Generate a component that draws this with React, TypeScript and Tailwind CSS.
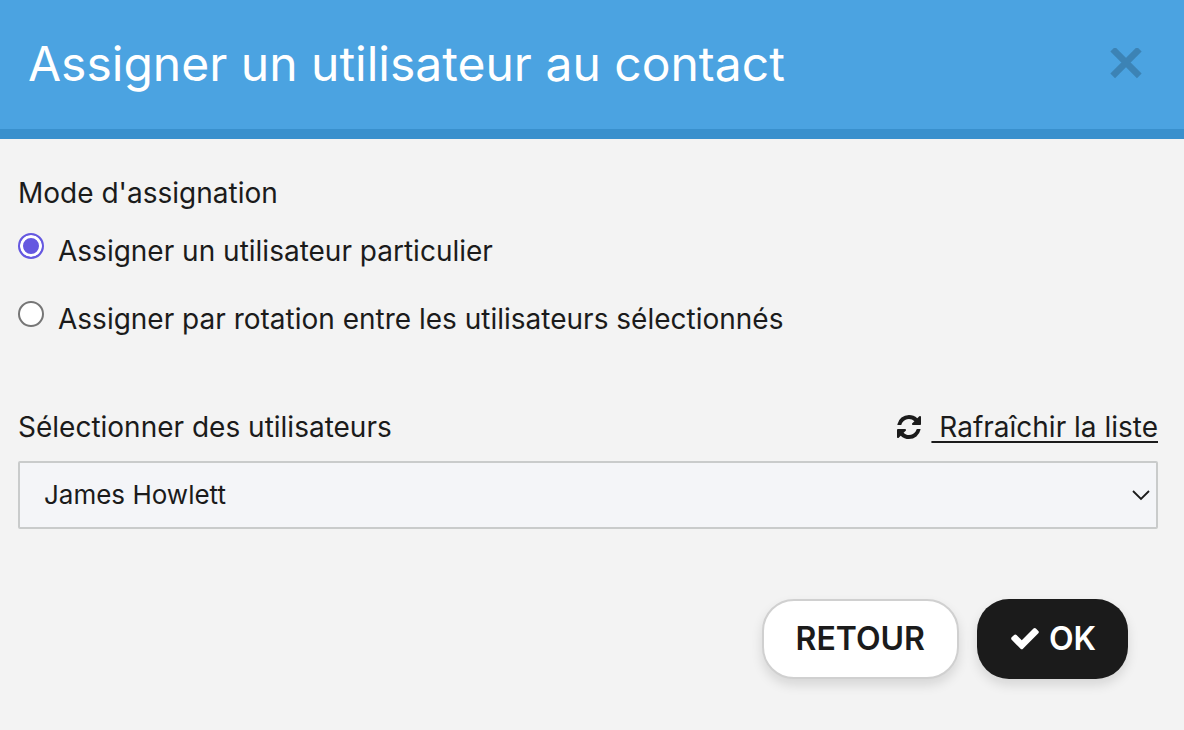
import React, { useState } from 'react';

type AssignMode = 'single' | 'rotation';

const MODES: { value: AssignMode; label: string }[] = [
  { value: 'single', label: 'Assigner un utilisateur particulier' },
  { value: 'rotation', label: 'Assigner par rotation entre les utilisateurs sélectionnés' },
];

const USERS = ['James Howlett'];

const CloseIcon: React.FC = () => (
  <svg className="h-8 w-8" viewBox="0 0 32 32" fill="none" stroke="currentColor" strokeWidth={6.6} aria-hidden="true">
    <path d="M2.7 1.2l26.6 26.6M29.3 1.2L2.7 27.8" />
  </svg>
);

const RefreshIcon: React.FC = () => (
  <svg className="h-6 w-6" viewBox="0 128 1536 1536" fill="currentColor" aria-hidden="true">
    <path d="M1511 1056q0 5-1 7-64 268-268 434.5t-478 166.5q-146 0-282.5-55t-243.5-157l-129 129q-19 19-45 19t-45-19-19-45v-448q0-26 19-45t45-19h448q26 0 45 19t19 45-19 45l-137 137q71 66 161 102t187 36q134 0 250-65t186-179q11-17 53-117 8-23 30-23h192q13 0 22.5 9.5t9.5 22.5zm25-800v448q0 26-19 45t-45 19h-448q-26 0-45-19t-19-45 19-45l138-138q-148-137-349-137-134 0-250 65t-186 179q-11 17-53 117-8 23-30 23h-199q-13 0-22.5-9.5t-9.5-22.5v-7q65-268 270-434.5t480-166.5q146 0 284 55.5t245 156.5l130-129q19-19 45-19t45 19 19 45z" />
  </svg>
);

const CheckIcon: React.FC = () => (
  <svg className="h-8 w-8" viewBox="0 56 1792 1792" fill="currentColor" aria-hidden="true">
    <path d="M1671 566q0 40-28 68l-724 724-136 136q-28 28-68 28t-68-28l-136-136-362-362q-28-28-28-68t28-68l136-136q28-28 68-28t68 28l294 295 656-657q28-28 68-28t68 28l136 136q28 28 28 68z" />
  </svg>
);

export default function App() {
  const [mode, setMode] = useState<AssignMode>('single');
  const [user, setUser] = useState(USERS[0]);

  return (
    <div className="min-h-screen bg-[#f3f3f3] font-['Inter',sans-serif] text-[28px] leading-9 text-[#1b1b1b]">
      <header className="flex items-center justify-between border-b-10 border-[#3990cd] bg-[#4ba3e1] pt-8 pr-[42px] pb-[33px] pl-7">
        <h1 className="text-5xl leading-16 text-white">Assigner un utilisateur au contact</h1>
        <button type="button" aria-label="Fermer" className="text-[#3c83b5]">
          <CloseIcon />
        </button>
      </header>

      <form className="pt-9 pr-[26px] pl-[18px]" onSubmit={(e) => e.preventDefault()}>
        <fieldset>
          <legend>Mode d'assignation</legend>
          <div className="mt-[22px] flex flex-col gap-8">
            {MODES.map(({ value, label }) => (
              <label key={value} className="flex items-start gap-[14px]">
                <input
                  type="radio"
                  name="mode"
                  value={value}
                  checked={mode === value}
                  onChange={() => setMode(value)}
                  className="h-[26px] w-[26px] shrink-0 appearance-none rounded-full border-2 border-[#767676] bg-white checked:border-[#6558e0] checked:bg-[#6558e0] checked:shadow-[inset_0_0_0_3px_white]"
                />
                <span>{label}</span>
              </label>
            ))}
          </div>
        </fieldset>

        <div className="mt-18 flex items-center justify-between">
          <label htmlFor="users">Sélectionner des utilisateurs</label>
          <a href="#" className="flex items-center gap-[10px]">
            <RefreshIcon />
            <span className="underline decoration-2 underline-offset-4">&nbsp;Rafraîchir la liste</span>
          </a>
        </div>

        <div className="relative mt-4">
          <select
            id="users"
            value={user}
            onChange={(e) => setUser(e.target.value)}
            className="block h-[68px] w-full appearance-none rounded-xs border-2 border-[#c9cbcb] bg-[#f4f5f8] px-6 text-[26px]"
          >
            {USERS.map((name) => (
              <option key={name}>{name}</option>
            ))}
          </select>
          <svg
            className="pointer-events-none absolute inset-y-0 right-2 my-auto h-3 w-[18px]"
            viewBox="0 0 18 12"
            fill="none"
            stroke="currentColor"
            strokeWidth={1.8}
            aria-hidden="true"
          >
            <path d="M1 2l8 8 8-8" />
          </svg>
        </div>

        <div className="mt-[70px] flex justify-end gap-[18px] pr-[30px] pb-12 text-[32px] font-semibold">
          <button type="button" className="h-20 rounded-[32px] border-2 border-[#d0d0d0] bg-white px-8 shadow-[0_6px_12px_rgba(0,0,0,0.12)]">
            RETOUR
          </button>
          <button type="submit" className="flex h-20 items-center gap-2 rounded-[32px] bg-[#1b1b1b] px-8 text-white shadow-[0_6px_12px_rgba(0,0,0,0.12)]">
            <CheckIcon />
            OK
          </button>
        </div>
      </form>
    </div>
  );
}
